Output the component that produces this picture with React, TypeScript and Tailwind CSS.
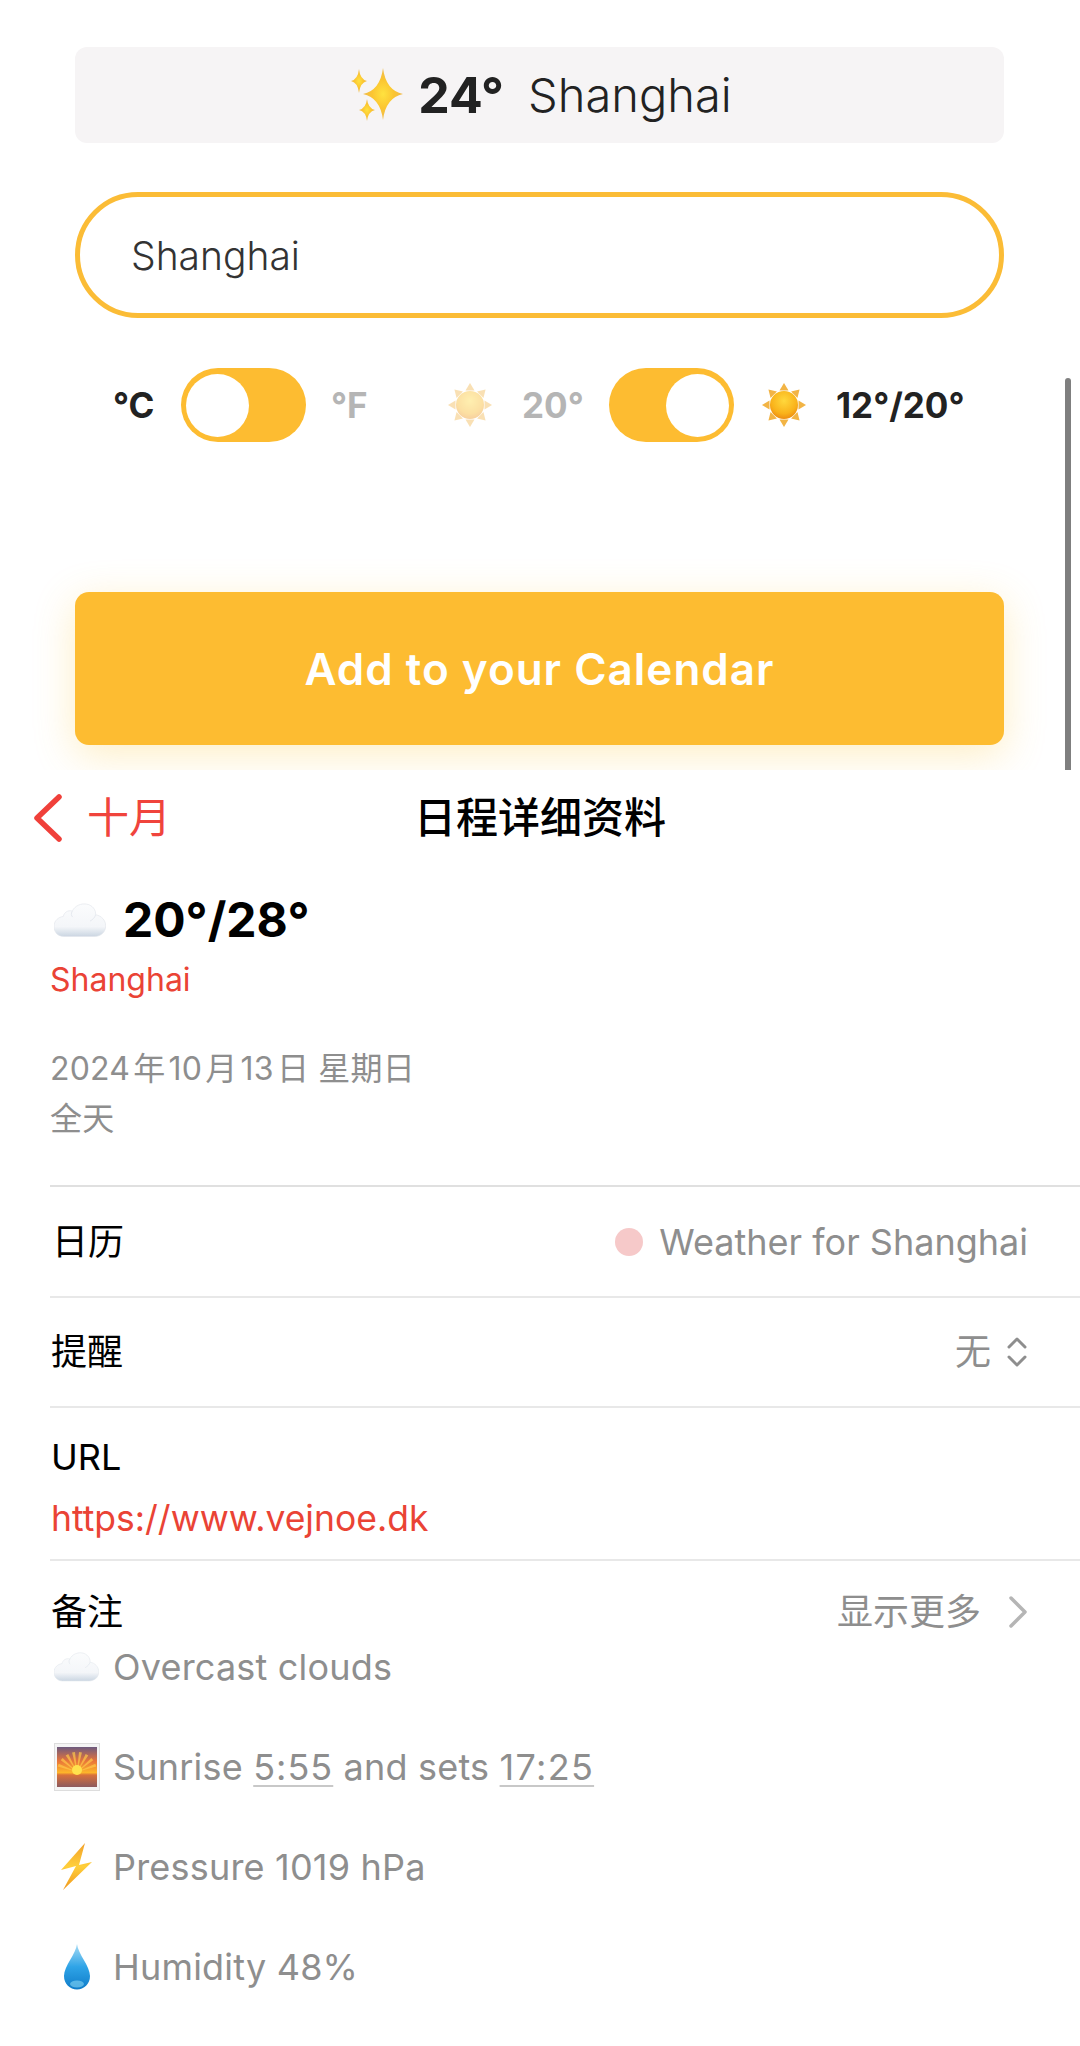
import { ReactNode } from "react";

function Sparkles() {
  const star = (x: number, y: number, rx: number, ry: number) => {
    const cx = rx * 0.14;
    const cy = ry * 0.14;
    return `M${x} ${y - ry}Q${x + cx} ${y - cy} ${x + rx} ${y}Q${x + cx} ${y + cy} ${x} ${y + ry}Q${x - cx} ${y + cy} ${x - rx} ${y}Q${x - cx} ${y - cy} ${x} ${y - ry}Z`;
  };
  return (
    <svg width="52" height="54" viewBox="0 0 52 54" className="shrink-0">
      <defs>
        <radialGradient id="spark" r="0.6">
          <stop offset="0" stopColor="#ffe23f" />
          <stop offset="0.45" stopColor="#fbc531" />
          <stop offset="1" stopColor="#e9b45a" />
        </radialGradient>
      </defs>
      <path d={star(8, 13, 8, 12)} fill="url(#spark)" />
      <path d={star(32, 26, 20, 26)} fill="url(#spark)" />
      <path d={star(16, 42, 8, 11)} fill="url(#spark)" />
    </svg>
  );
}

function Sun({ faded }: { faded?: boolean }) {
  const rays = [0, 45, 90, 135, 180, 225, 270, 315];
  return (
    <svg width="44" height="44" viewBox="0 0 44 44" className={faded ? "shrink-0 opacity-40" : "shrink-0"}>
      <defs>
        <radialGradient id="sunBody" cx="0.5" cy="0.35" r="0.7">
          <stop offset="0" stopColor="#ffd83c" />
          <stop offset="0.65" stopColor="#f9b21a" />
          <stop offset="1" stopColor="#ea8410" />
        </radialGradient>
      </defs>
      {rays.map((a) => (
        <path key={a} d="M22 0L26.5 7.5H17.5Z" fill="#f2b445" transform={`rotate(${a} 22 22)`} />
      ))}
      <circle cx="22" cy="22" r="14" fill="url(#sunBody)" />
    </svg>
  );
}

function Cloud({ w = 52 }: { w?: number }) {
  return (
    <svg width={w} height={w * 0.645} viewBox="0 0 156 100" className="shrink-0">
      <defs>
        <linearGradient id="cloudFill" x1="0" y1="0" x2="0" y2="1">
          <stop offset="0" stopColor="#fbfcfd" />
          <stop offset="0.7" stopColor="#f4f6f9" />
          <stop offset="1" stopColor="#cbd6e2" />
        </linearGradient>
      </defs>
      <path
        d="M30 100C10 100 0 85 0 70C0 52 14 42 28 40C30 28 42 20 55 24C62 8 82 0 98 3C115 6 126 20 125 35C143 38 155 52 155 68C155 88 140 100 122 100Z"
        fill="url(#cloudFill)"
        stroke="#e2e6ec"
        strokeWidth="2"
      />
      <path d="M55 24C50 32 52 38 56 42M125 35C122 44 116 50 108 54" fill="none" stroke="#e6eaf0" strokeWidth="3" />
    </svg>
  );
}

function Sunrise() {
  const rays = [-70, -50, -30, -10, 10, 30, 50, 70];
  return (
    <svg width="46" height="48" viewBox="0 0 46 48" className="shrink-0">
      <defs>
        <linearGradient id="sky" x1="0" y1="0" x2="0" y2="1">
          <stop offset="0" stopColor="#6d5a7e" />
          <stop offset="0.35" stopColor="#e8743a" />
          <stop offset="0.64" stopColor="#fdb52a" />
          <stop offset="0.7" stopColor="#d9713a" />
          <stop offset="1" stopColor="#8d5a5e" />
        </linearGradient>
      </defs>
      <rect x="0.5" y="0.5" width="45" height="47" fill="#f4f4f4" stroke="#dddddd" />
      <rect x="3" y="4" width="40" height="40" fill="url(#sky)" />
      {rays.map((a) => (
        <path key={a} d="M23 29L21.5 9H24.5Z" fill="#ffc94a" opacity="0.7" transform={`rotate(${a} 23 29)`} />
      ))}
      <circle cx="23" cy="27" r="5" fill="#ffe14d" />
    </svg>
  );
}

function Bolt() {
  return (
    <svg width="34" height="48" viewBox="0 0 34 48" className="shrink-0">
      <defs>
        <linearGradient id="bolt" x1="0" y1="0" x2="0" y2="1">
          <stop offset="0" stopColor="#f2a02a" />
          <stop offset="0.5" stopColor="#ffcf3a" />
          <stop offset="1" stopColor="#f0961c" />
        </linearGradient>
      </defs>
      <path d="M25 0L1 27L16 23L3 47L32 19L19 22Z" fill="url(#bolt)" />
    </svg>
  );
}

function Drop() {
  return (
    <svg width="28" height="46" viewBox="0 0 28 46" className="shrink-0">
      <defs>
        <linearGradient id="drop" x1="0" y1="0" x2="0" y2="1">
          <stop offset="0" stopColor="#a8dcf5" />
          <stop offset="0.5" stopColor="#2fa4e7" />
          <stop offset="1" stopColor="#0f7cc9" />
        </linearGradient>
      </defs>
      <path d="M14 0C15 10 27 22 27 32C27 40 21 45.5 14 45.5C7 45.5 1 40 1 32C1 22 13 10 14 0Z" fill="url(#drop)" />
      <ellipse cx="14" cy="40" rx="7" ry="3.5" fill="#8fdcf8" opacity="0.55" />
    </svg>
  );
}

function Toggle({ on }: { on?: boolean }) {
  return (
    <div className={`flex h-[74px] w-[125px] shrink-0 items-center rounded-full bg-[#fdbc31] px-[5px] ${on ? "justify-end" : "justify-start"}`}>
      <div className="h-[63px] w-[63px] rounded-full bg-white" />
    </div>
  );
}

function NoteLine({ icon, children }: { icon: ReactNode; children: ReactNode }) {
  return (
    <div className="flex h-[100px] items-center">
      <div className="flex w-[63px] shrink-0 justify-center pr-[10px]">{icon}</div>
      <div className="whitespace-pre">{children}</div>
    </div>
  );
}

export default function App() {
  return (
    <div className="h-[2046px] overflow-hidden bg-white font-['Inter','Noto_Sans_CJK_SC',sans-serif] text-black">
      <div className="relative h-[770px] overflow-hidden pt-[47px] pl-[75px] pr-[76px]">
        <div className="flex h-[96px] items-center justify-center rounded-xl bg-[#f6f4f5] pl-[4px] text-[47px] text-[#222222]">
          <Sparkles />
          <span className="ml-[15px] text-[50px] font-bold">24°</span>
          <span className="ml-[24px] font-light">Shanghai</span>
        </div>

        <div className="mt-[49px] flex h-[126px] items-center rounded-full border-[5px] border-[#fbbc36] pl-[51px] pt-[3px] text-[39px] font-light text-[#333333]">
          Shanghai
        </div>

        <div className="mt-[50px] flex h-[74px] items-center pl-[38px] text-[35px] font-bold">
          <span className="w-[68px] text-[#222222]">°C</span>
          <Toggle />
          <span className="ml-[25px] w-[117px] text-[#b5b5b5]">°F</span>
          <Sun faded />
          <span className="ml-[30px] w-[87px] text-[#b5b5b5]">20°</span>
          <Toggle on />
          <span className="ml-[28px]"><Sun /></span>
          <span className="ml-[30px] text-[#222222]">12°/20°</span>
        </div>

        <div className="mt-[150px] flex h-[153px] items-center justify-center rounded-[14px] bg-[#fdbc31] text-[44px] font-semibold tracking-[1px] text-white shadow-[0_10px_40px_rgba(251,200,60,0.3)]">
          Add to your Calendar
        </div>

        <div className="absolute right-[9px] top-[378px] h-[392px] w-[6px] rounded-t-full bg-[#7f7f7f]" />
      </div>

      <div className="grid h-[95px] grid-cols-3 items-center px-[33px]">
        <div className="flex items-center text-[42px] text-[#f0443c]">
          <svg width="30" height="48" viewBox="0 0 30 48" className="shrink-0">
            <path d="M26 3L4 24L26 45" fill="none" stroke="#f0403a" strokeWidth="5.5" strokeLinecap="round" strokeLinejoin="round" />
          </svg>
          <span className="ml-[24px] whitespace-nowrap">十月</span>
        </div>
        <div className="whitespace-nowrap text-center text-[42px] font-medium">日程详细资料</div>
      </div>

      <div className="pl-[50px]">
        <div className="mt-[25px] flex h-[60px] items-center pl-[4px]">
          <Cloud />
          <span className="ml-[17px] text-[48px] font-bold">20°/28°</span>
        </div>
        <div className="mt-[8px] text-[32px] leading-[44px] text-[#ea4335]">Shanghai</div>
        <div className="mt-[42px] text-[32px] leading-[50px] tracking-[0.2px] text-[#8e8e8e]">
          <div>{"2024\u200A年\u200A10\u200A月\u200A13\u200A日 星期日"}</div>
          <div>全天</div>
        </div>

        <div className="mt-[41px] flex h-[111px] items-center justify-between border-t-2 border-[#e0e0e0] pl-[2px] pr-[52px] text-[36px]">
          <span>日历</span>
          <span className="flex items-center text-[#8e8e8e]">
            <span className="mr-[16px] h-[28px] w-[28px] rounded-full bg-[#f6c9c9]" />
            Weather for Shanghai
          </span>
        </div>

        <div className="flex h-[110px] items-center justify-between border-t-2 border-[#e8e8e8] pl-[1px] pr-[52px] text-[36px]">
          <span>提醒</span>
          <span className="flex items-center text-[#8e8e8e]">
            无
            <svg width="22" height="32" viewBox="0 0 22 32" className="ml-[15px]">
              <path d="M3 11L11 3L19 11M3 21L11 29L19 21" fill="none" stroke="#8e8e8e" strokeWidth="3" strokeLinecap="round" strokeLinejoin="round" />
            </svg>
          </span>
        </div>

        <div className="h-[153px] border-t-2 border-[#e8e8e8] pl-[1px] text-[36px]">
          <div className="pt-[27px] leading-[44px]">URL</div>
          <div className="mt-[18px] text-[35.5px] leading-[44px] text-[#ea4335]">https://www.vejnoe.dk</div>
        </div>

        <div className="border-t-2 border-[#e8e8e8] text-[36px]">
          <div className="flex h-[74px] items-center justify-between pl-[1px] pr-[52px] pt-[28px]">
            <span>备注</span>
            <span className="flex items-center text-[#8e8e8e]">
              显示更多
              <svg width="20" height="34" viewBox="0 0 20 34" className="ml-[27px]">
                <path d="M3 3L17 17L3 31" fill="none" stroke="#b5b5b5" strokeWidth="3.5" strokeLinecap="round" strokeLinejoin="round" />
              </svg>
            </span>
          </div>
          <div className="-mt-[18px] tracking-[0.2px] text-[#8e8e8e]">
            <NoteLine icon={<Cloud w={45} />}>Overcast clouds</NoteLine>
            <NoteLine icon={<Sunrise />}>
              Sunrise <span className="tracking-[1px] underline decoration-[#c8c8c8] decoration-2 underline-offset-[5px]">5:55</span> and sets{" "}
              <span className="tracking-[1.3px] underline decoration-[#c8c8c8] decoration-2 underline-offset-[5px]">17:25</span>
            </NoteLine>
            <NoteLine icon={<Bolt />}>Pressure 1019 hPa</NoteLine>
            <NoteLine icon={<Drop />}>Humidity 48%</NoteLine>
          </div>
        </div>
      </div>
    </div>
  );
}
